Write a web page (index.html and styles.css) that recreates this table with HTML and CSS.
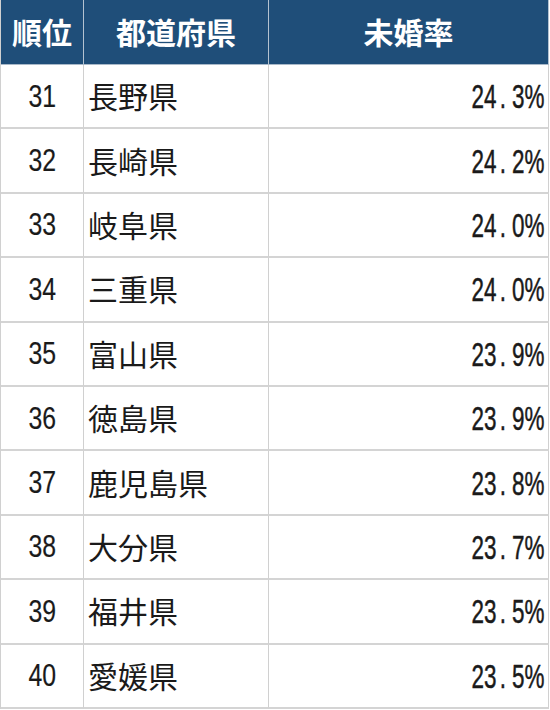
FILE: index.html
```html
<!DOCTYPE html>
<html lang="ja">
<head>
<meta charset="utf-8">
<title>未婚率</title>
<link rel="stylesheet" href="styles.css">
</head>
<body>
<div class="rank-table">
  <div class="cell head">順位</div>
  <div class="cell head">都道府県</div>
  <div class="cell head">未婚率</div>

  <div class="cell rank"><span class="num">31</span></div><div class="cell pref">長野県</div><div class="cell rate"><span class="pct">24<span class="dot">.</span>3%</span></div>
  <div class="cell rank"><span class="num">32</span></div><div class="cell pref">長崎県</div><div class="cell rate"><span class="pct">24<span class="dot">.</span>2%</span></div>
  <div class="cell rank"><span class="num">33</span></div><div class="cell pref">岐阜県</div><div class="cell rate"><span class="pct">24<span class="dot">.</span>0%</span></div>
  <div class="cell rank"><span class="num">34</span></div><div class="cell pref">三重県</div><div class="cell rate"><span class="pct">24<span class="dot">.</span>0%</span></div>
  <div class="cell rank"><span class="num">35</span></div><div class="cell pref">富山県</div><div class="cell rate"><span class="pct">23<span class="dot">.</span>9%</span></div>
  <div class="cell rank"><span class="num">36</span></div><div class="cell pref">徳島県</div><div class="cell rate"><span class="pct">23<span class="dot">.</span>9%</span></div>
  <div class="cell rank"><span class="num">37</span></div><div class="cell pref">鹿児島県</div><div class="cell rate"><span class="pct">23<span class="dot">.</span>8%</span></div>
  <div class="cell rank"><span class="num">38</span></div><div class="cell pref">大分県</div><div class="cell rate"><span class="pct">23<span class="dot">.</span>7%</span></div>
  <div class="cell rank"><span class="num">39</span></div><div class="cell pref">福井県</div><div class="cell rate"><span class="pct">23<span class="dot">.</span>5%</span></div>
  <div class="cell rank"><span class="num">40</span></div><div class="cell pref">愛媛県</div><div class="cell rate"><span class="pct">23<span class="dot">.</span>5%</span></div>
</div>
</body>
</html>
```

FILE: styles.css
```css
html, body {
  margin: 0;
  padding: 0;
  background: #ffffff;
}

.rank-table {
  display: grid;
  grid-template-columns: 83px 185px 280px;
  grid-template-rows: 65px repeat(10, 64.4px);
  width: 549px;
  border-left: 1px solid #d0d0d0;
  font-family: "Noto Sans CJK JP", "Noto Sans", sans-serif;
  color: #1a1a1a;
}

.cell {
  box-sizing: border-box;
  display: flex;
  align-items: center;
  border-right: 1px solid #d0d0d0;
  border-bottom: 2px solid #d4d4d4;
  line-height: 1;
  overflow: hidden;
}

.head {
  justify-content: center;
  background: #1f4e79;
  color: #ffffff;
  font-size: 30px;
  font-weight: 700;
  border-right-color: #b4c2d0;
  border-bottom: 1px solid #a9b9c9;
  padding-bottom: 3px;
}

.rank {
  justify-content: center;
}

.num {
  display: inline-block;
  font-family: "Liberation Sans", sans-serif;
  font-size: 31px;
  transform: scaleX(0.8);
  transform-origin: center;
  -webkit-text-stroke: 0.2px #1a1a1a;
}

.pref {
  justify-content: flex-start;
  padding-left: 4px;
  padding-bottom: 2px;
  font-size: 30px;
  font-weight: 400;
}

.rate {
  justify-content: flex-end;
  padding-right: 4px;
}

.pct {
  display: inline-block;
  font-family: "Liberation Sans", sans-serif;
  font-size: 34px;
  transform: scaleX(0.66);
  transform-origin: right center;
  white-space: nowrap;
  -webkit-text-stroke: 0.5px #1a1a1a;
}

.dot {
  margin-left: 5px;
  margin-right: 9px;
}
```
